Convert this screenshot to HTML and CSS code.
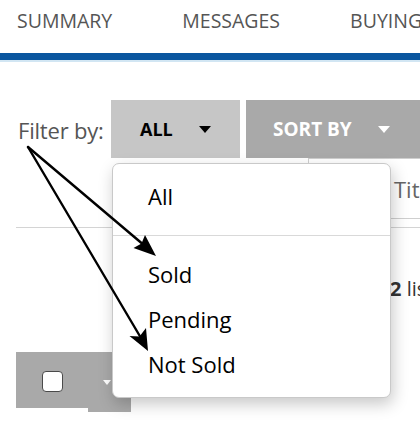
FILE: index.html
```html
<!DOCTYPE html>
<html lang="en">
<head>
<meta charset="utf-8">
<title>Listings filter</title>
<link rel="stylesheet" href="styles.css">
</head>
<body>
<div class="page">
  <nav class="tabs">
    <span class="tab">SUMMARY</span>
    <span class="tab">MESSAGES</span>
    <span class="tab">BUYING</span>
    <span class="tab">SELLING</span>
  </nav>
  <div class="tabs-accent"></div>

  <div class="toolbar">
    <span class="filter-label">Filter by:</span>
    <button class="btn btn-filter">ALL <span class="caret"></span></button>
    <button class="btn btn-sort">SORT BY <span class="caret caret-white"></span></button>
  </div>

  <div class="search-row">
    <div class="search-box"><span class="search-placeholder">Title</span></div>
  </div>
  <div class="rule"></div>

  <div class="count-row"><b>2</b> listings</div>

  <div class="bulk">
    <div class="bulk-check"><span class="checkbox"></span></div>
    <div class="bulk-caret"><span class="caret caret-white caret-small"></span></div>
  </div>

  <ul class="menu">
    <li class="menu-item">All</li>
    <li class="menu-divider"></li>
    <li class="menu-item">Sold</li>
    <li class="menu-item">Pending</li>
    <li class="menu-item">Not Sold</li>
  </ul>

  <svg class="arrows" width="420" height="422" viewBox="0 0 420 422">
    <line x1="28" y1="147" x2="145" y2="246" stroke="#000" stroke-width="2.4" stroke-linecap="round"/>
    <polygon points="156,256 133.5,248 141.5,243.5 145,235" fill="#000"/>
    <line x1="28" y1="147" x2="141" y2="338" stroke="#000" stroke-width="2.4" stroke-linecap="round"/>
    <polygon points="148,351 129.5,336 139.5,336.5 146,328" fill="#000"/>
  </svg>
</div>
</body>
</html>
```
FILE: styles.css
```css
* { box-sizing: border-box; }

html, body {
  margin: 0;
  padding: 0;
  background: #fff;
}

body {
  width: 420px;
  height: 422px;
  overflow: hidden;
  font-family: "Open Sans", "Noto Sans", sans-serif;
}

.page {
  position: relative;
  width: 420px;
  height: 422px;
  overflow: hidden;
}

.tabs {
  display: flex;
  gap: 70px;
  padding: 8px 0 0 17px;
  white-space: nowrap;
  border-bottom: 7px solid #0a569f;
  box-sizing: content-box;
  height: 45px;
}

.tab {
  font-size: 19.5px;
  line-height: 26px;
  color: #555;
  flex: none;
}

.tabs-accent {
  height: 2px;
  background: #d2e6f3;
}

.toolbar {
  display: flex;
  align-items: stretch;
  height: 58px;
  margin-top: 38px;
  white-space: nowrap;
}

.filter-label {
  flex: none;
  width: 111px;
  padding-left: 18px;
  display: flex;
  align-items: center;
  font-size: 22px;
  letter-spacing: -0.2px;
  color: #555;
  padding-top: 1px;
}

.btn {
  flex: none;
  border: 0;
  margin: 0;
  display: flex;
  align-items: center;
  font-family: "Open Sans", "Noto Sans", sans-serif;
  font-weight: 700;
  font-size: 18px;
  height: 58px;
}

.btn-filter {
  width: 129px;
  background: #c6c6c6;
  color: #000;
  padding-left: 29px;
  gap: 26px;
}

.btn-sort {
  width: 200px;
  margin-left: 6px;
  background: #a9a9a9;
  color: #fff;
  padding-left: 27px;
  gap: 26px;
  font-size: 19px;
}

.caret {
  display: inline-block;
  width: 0;
  height: 0;
  border-left: 6.5px solid transparent;
  border-right: 6.5px solid transparent;
  border-top: 7px solid #000;
  margin-top: 1px;
}

.caret-white { border-top-color: #fff; }

.caret-small {
  border-left-width: 4.5px;
  border-right-width: 4.5px;
  border-top-width: 5px;
}

.search-row {
  display: flex;
  height: 61px;
}

.search-box {
  margin-left: 308px;
  flex: 1;
  border: 1px solid #cfcfcf;
  border-right: 0;
  display: flex;
  align-items: center;
  padding-left: 85px;
}

.search-placeholder {
  font-size: 22px;
  color: #666;
}

.rule {
  margin: 8px 0 0 16px;
  height: 1px;
  background: #d4d4d4;
}

.count-row {
  margin-top: 48px;
  padding-left: 390px;
  font-size: 20px;
  line-height: 26px;
  color: #333;
  white-space: nowrap;
}

.bulk {
  display: flex;
  align-items: flex-start;
  margin: 50px 0 0 16px;
}

.bulk-check {
  width: 72px;
  height: 56px;
  background: #a9a9a9;
  display: flex;
  align-items: center;
  justify-content: center;
  padding-top: 3px;
}

.checkbox {
  width: 21px;
  height: 21px;
  background: #fff;
  border: 1.5px solid #4a4a4a;
  border-radius: 4px;
}

.bulk-caret {
  width: 43px;
  height: 60px;
  background: #a9a9a9;
  display: flex;
  align-items: flex-start;
  padding: 27px 0 0 15px;
}

.menu {
  position: absolute;
  left: 112px;
  top: 163px;
  width: 279px;
  height: 235px;
  margin: 0;
  padding: 10px 0 0;
  list-style: none;
  background: #fff;
  border: 1px solid #c9c9c9;
  border-radius: 7px;
  box-shadow: 2px 6px 16px rgba(0, 0, 0, 0.22);
}

.menu-item {
  padding-left: 35px;
  height: 45px;
  line-height: 45px;
  font-size: 22px;
  color: #000;
}

.menu-divider {
  height: 1px;
  background: #d9d9d9;
  margin: 16px 0 16px;
}

.arrows {
  position: absolute;
  left: 0;
  top: 0;
  pointer-events: none;
}
```
